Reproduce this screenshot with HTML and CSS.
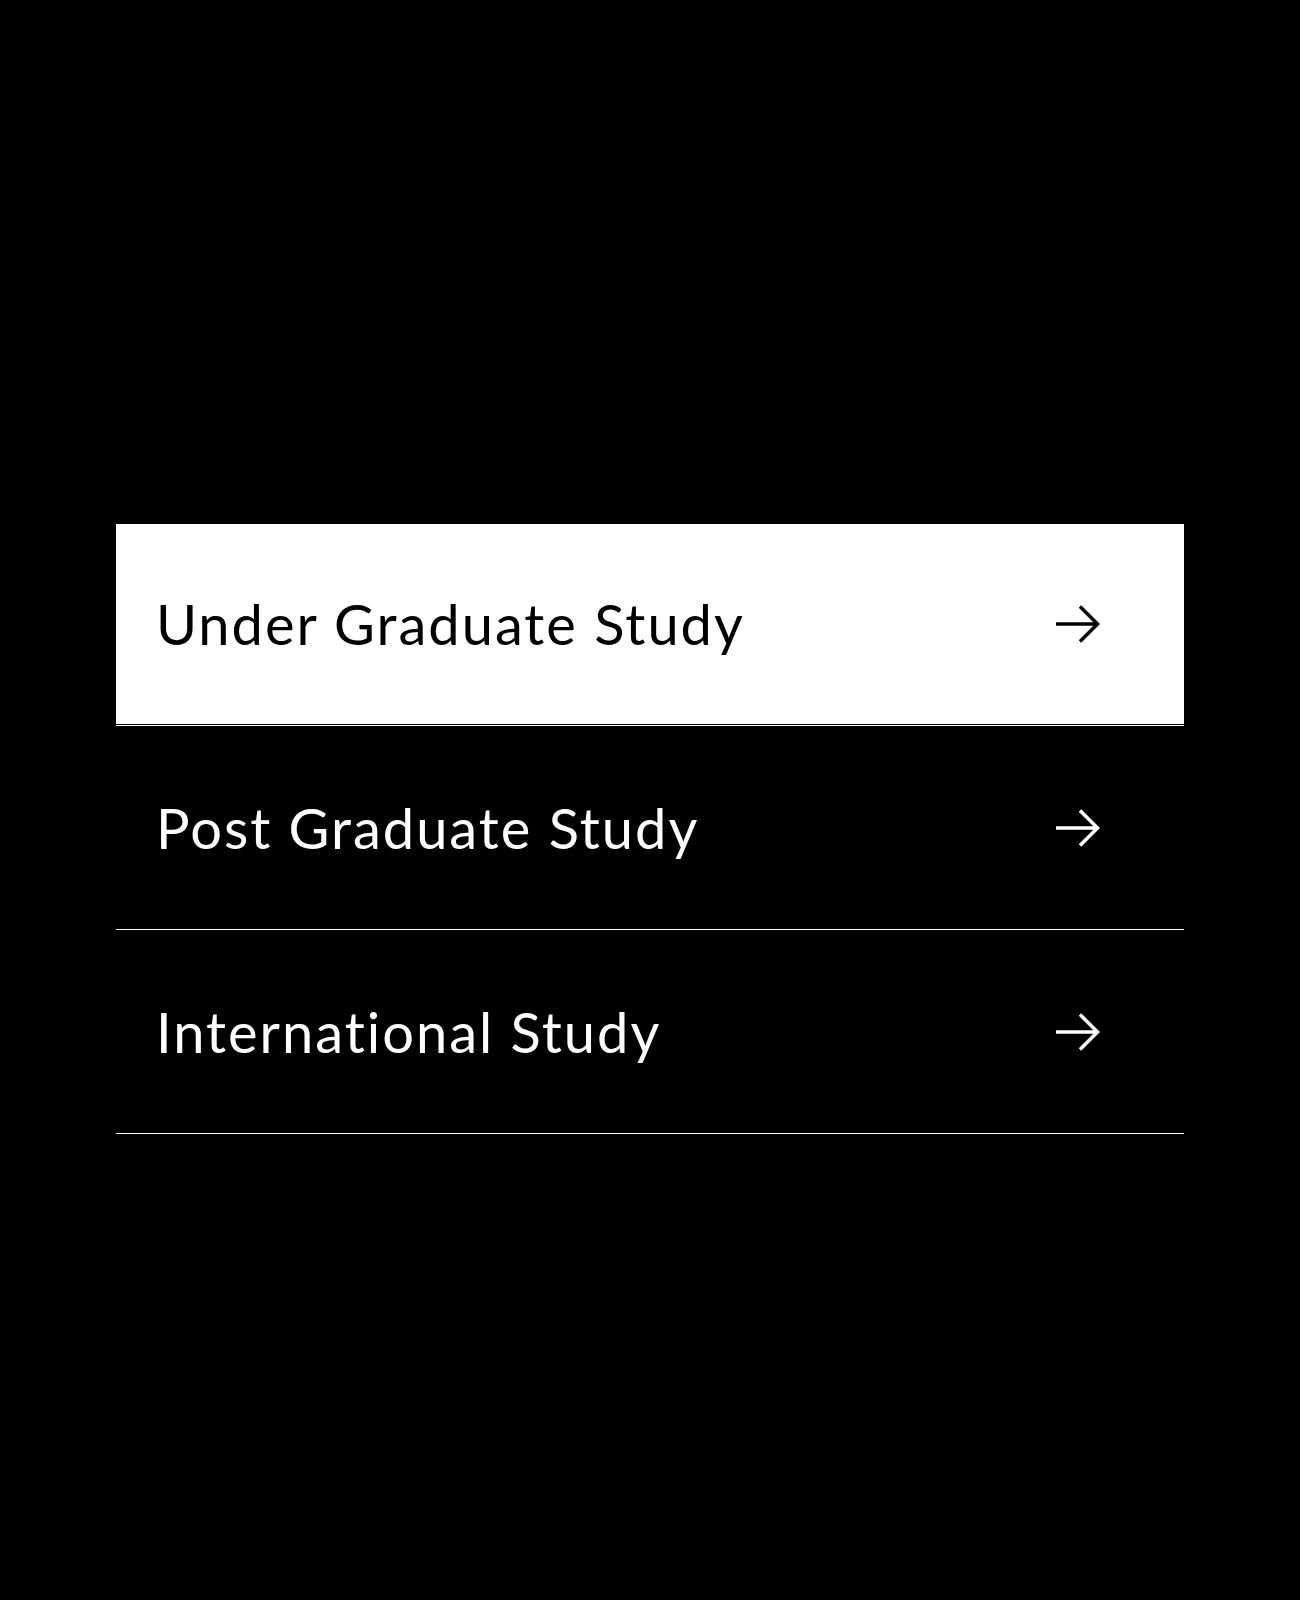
FILE: index.html
```html
<!DOCTYPE html>
<html lang="en">
<head>
    <meta charset="UTF-8">
    <title>Study Options</title>
    <link rel="stylesheet" href="styles.css">
</head>
<body>
    <div class="container">
        <ul class="study-list">
            <li class="study-item active">
                <a href="#" class="study-link">
                    <span class="study-title">Under Graduate Study</span>
                    <svg class="arrow" width="46" height="40" viewBox="0 0 46 40"><path d="M2 20 H44 M26 2.5 L43.5 20 L26 37.5"/></svg>
                </a>
            </li>
            <li class="study-item">
                <a href="#" class="study-link">
                    <span class="study-title">Post Graduate Study</span>
                    <svg class="arrow" width="46" height="40" viewBox="0 0 46 40"><path d="M2 20 H44 M26 2.5 L43.5 20 L26 37.5"/></svg>
                </a>
            </li>
            <li class="study-item">
                <a href="#" class="study-link">
                    <span class="study-title">International Study</span>
                    <svg class="arrow" width="46" height="40" viewBox="0 0 46 40"><path d="M2 20 H44 M26 2.5 L43.5 20 L26 37.5"/></svg>
                </a>
            </li>
        </ul>
    </div>
</body>
</html>
```

FILE: styles.css
```css
body {
    margin: 0;
    min-height: 1600px;
    background-color: #000;
    font-family: Lato, "Open Sans", Arial, sans-serif;
}
.container {
    width: 1068px;
    margin: 0 auto;
    padding-top: 522px;
}
.study-list {
    list-style: none;
    margin: 0;
    padding: 0;
}
.study-item {
    padding: 2px 0 1px;
    border-bottom: 1px solid #fff;
}
.study-link {
    display: flex;
    align-items: center;
    justify-content: space-between;
    height: 200px;
    padding: 0 84px 0 40px;
    color: #fff;
    text-decoration: none;
}
.study-title {
    font-size: 56px;
    line-height: 1;
    letter-spacing: 2px;
}
.arrow {
    display: block;
    fill: none;
    stroke: currentColor;
    stroke-width: 3.5;
}
/* the open row is drawn inverted */
.study-item.active .study-link {
    background-color: #fff;
    color: #000;
}
```
